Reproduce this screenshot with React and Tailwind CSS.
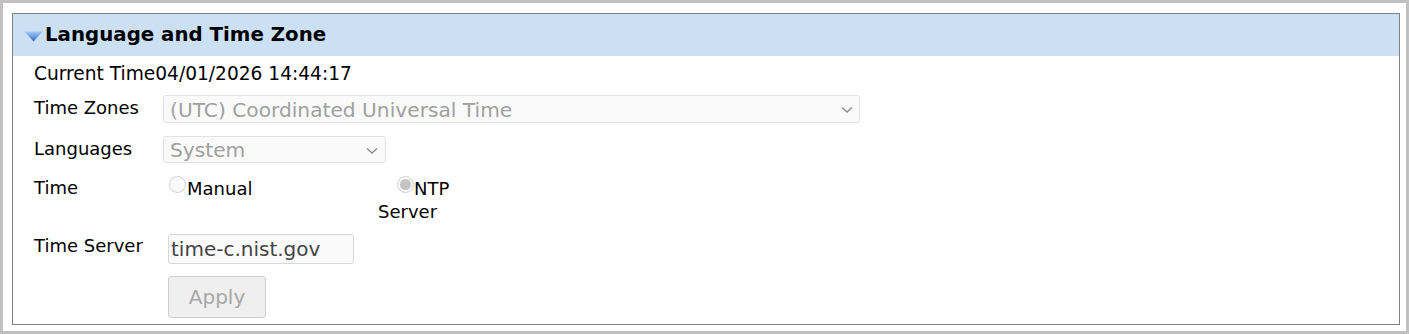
import React from 'react';

function Chevron() {
  return (
    <svg width="12" height="8" viewBox="0 0 12 8" className="shrink-0">
      <path d="M1 1.5 L6 6 L11 1.5" fill="none" stroke="#8a8a8a" strokeWidth="1.4" />
    </svg>
  );
}

function Radio({ checked }) {
  return (
    <span className="inline-flex items-center justify-center w-[17px] h-[17px] rounded-full border border-[#d0d0d0] bg-[#fafafa] shrink-0">
      {checked && <span className="w-[11px] h-[11px] rounded-full bg-[#c4c4c4]" />}
    </span>
  );
}

export default function App() {
  return (
    <div className="w-[1409px] h-[334px] bg-white border-[3px] border-[#c0c0c0] pt-[10px] pl-[9px] pr-[6px] pb-[6px] font-['DejaVu_Sans',Verdana,sans-serif] text-black">
      <div className="h-full border border-[#808080] bg-white">
        <div className="h-[42px] bg-[#cce0f4] flex items-center pl-[11px]">
          <svg width="19" height="11" viewBox="0 0 19 11" className="mr-[2px] mt-[2px]">
            <defs>
              <linearGradient id="tri" x1="0" y1="0" x2="0" y2="1">
                <stop offset="0" stopColor="#a6cbf6" />
                <stop offset="1" stopColor="#2f6cc8" />
              </linearGradient>
            </defs>
            <path d="M0.5 0.5 H18.5 L9.5 10.5 Z" fill="url(#tri)" />
          </svg>
          <span className="font-bold text-[19.8px] leading-none">Language and Time Zone</span>
        </div>

        <div className="pl-[21px] text-[18px]">
          <div className="h-[34px] flex items-center pt-[1px] text-[18.6px]">Current Time04/01/2026 14:44:17</div>

          <div className="flex mt-[5px]">
            <div className="w-[129px] pt-[2px] leading-[22px]">Time Zones</div>
            <div className="w-[697px] h-[28px] border border-[#e2e2e2] rounded-[3px] bg-[#fafafa] flex items-center justify-between pl-[6px] pr-[6px] pt-[2px] text-[20.2px] text-[#a0a0a0]">
              <span>(UTC) Coordinated Universal Time</span>
              <Chevron />
            </div>
          </div>

          <div className="flex mt-[13px]">
            <div className="w-[129px] pt-[2px] leading-[22px]">Languages</div>
            <div className="w-[223px] h-[27px] border border-[#e2e2e2] rounded-[3px] bg-[#fafafa] flex items-center justify-between pl-[6px] pr-[7px] pt-[2px] text-[20.2px] text-[#a0a0a0]">
              <span>System</span>
              <Chevron />
            </div>
          </div>

          <div className="flex mt-[13px]">
            <div className="w-[129px] pt-[1px] leading-[22px]">Time</div>
            <div className="w-[215px] pl-[6px] flex items-start">
              <Radio />
              <span className="leading-[22px] mt-[2px] ml-[1px]">Manual</span>
            </div>
            <div className="leading-[24px]">
              <div className="flex items-start pl-[19px]">
                <Radio checked />
                <span className="leading-[22px] mt-[2px]">NTP</span>
              </div>
              <div>Server</div>
            </div>
          </div>

          <div className="flex mt-[10px]">
            <div className="w-[134px] pt-[1px] leading-[22px]">Time Server</div>
            <div className="w-[186px] h-[30px] border border-[#d8d8d8] rounded-[3px] bg-[#fafafa] flex items-center pl-[2px] text-[20px] text-[#444]">
              time-c.nist.gov
            </div>
          </div>

          <div className="pl-[134px] mt-[12px]">
            <button className="w-[98px] h-[42px] border border-[#cfcfcf] rounded-[3px] bg-[#efefef] text-[20px] text-[#a8a8a8]">
              Apply
            </button>
          </div>
        </div>
      </div>
    </div>
  );
}
